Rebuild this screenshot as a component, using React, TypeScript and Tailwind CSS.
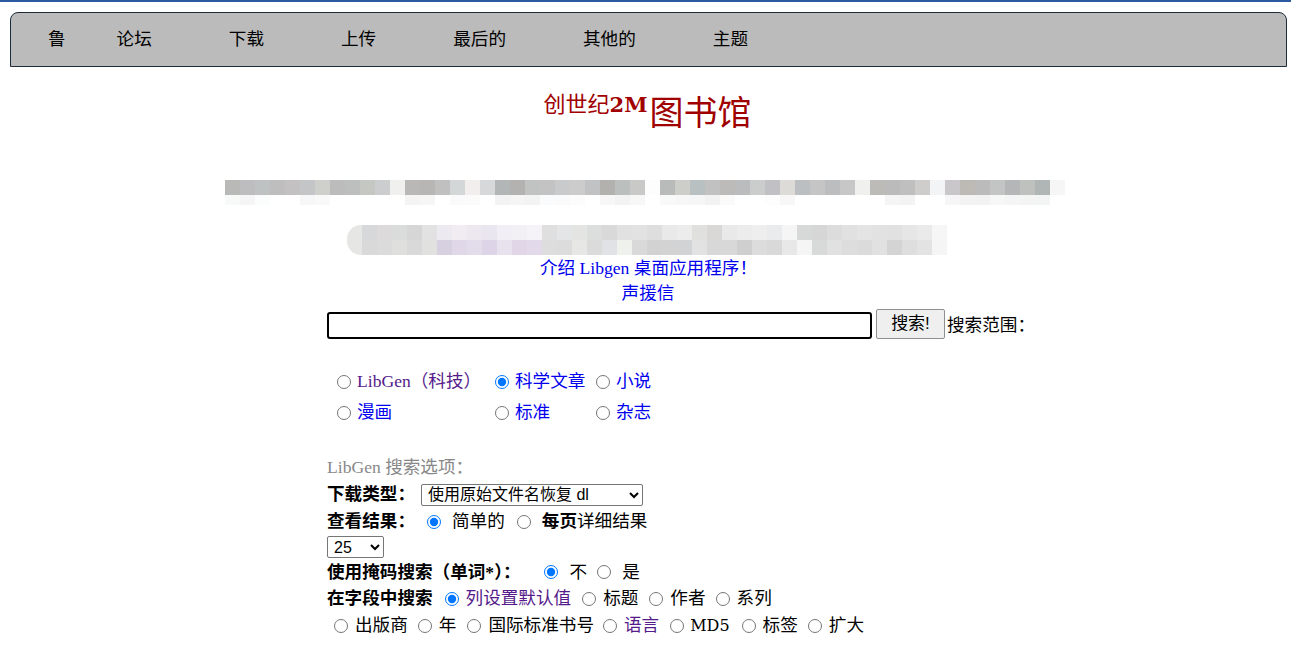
import React from "react";

const serif = "font-['Liberation_Serif','Noto_Sans_CJK_SC',serif]";
const sans = "font-['Liberation_Sans','Noto_Sans_CJK_SC',sans-serif]";

const navItems = ["鲁", "论坛", "下载", "上传", "最后的", "其他的", "主题"];

// pixelated (blurred) strips, one class per block
const topA = [
  "bg-[#b9b9b7]", "bg-[#bdbcbe]", "bg-[#bfc2c2]", "bg-[#bdbebd]", "bg-[#c3c1c1]", "bg-[#c4c5c6]", "bg-[#cfcfcc]", "bg-[#bdbcbc]",
  "bg-[#bdbebe]", "bg-[#c5c7c3]", "bg-[#cbcdcf]", "bg-[#f0f0ee]", "bg-[#b9b8b7]", "bg-[#b7b6b4]", "bg-[#c0c0c1]", "bg-[#d4d7d8]",
  "bg-[#f3eeee]", "bg-[#d6d8d9]", "bg-[#b3b6b6]", "bg-[#b3b2b0]", "bg-[#c1c3c3]", "bg-[#c3c3c3]", "bg-[#c8cacb]", "bg-[#cdcccc]",
  "bg-[#c1c2c3]", "bg-[#b3b1ae]", "bg-[#bbbfbe]", "bg-[#c9c9c8]", "bg-[#fdfdfe]", "bg-[#b9baba]", "bg-[#cdceca]", "bg-[#b9c0c1]",
  "bg-[#c1c1c1]", "bg-[#bdbbb9]", "bg-[#bbbcbe]", "bg-[#cbcdcc]", "bg-[#c0c0c5]", "bg-[#dcdbd8]", "bg-[#bcbfc2]", "bg-[#c5c5c5]",
  "bg-[#bbbdbf]", "bg-[#c7c7c7]", "bg-[#f0f0ee]", "bg-[#bcbbb8]", "bg-[#bbbbbb]", "bg-[#bfbfc0]", "bg-[#cfcdcb]", "bg-[#f3f4f6]",
  "bg-[#c9c7ca]", "bg-[#bdbab6]", "bg-[#bbbbbb]", "bg-[#c3c5c4]", "bg-[#b4b6b8]", "bg-[#bfc1be]", "bg-[#b0b6b6]", "bg-[#f6f6f6]",
];
const topB = [
  "bg-[#f8f9f9]", "bg-[#f5f5f5]", "bg-[#fbfcfc]", "bg-[#ffffff]", "bg-[#ffffff]", "bg-[#f7f7f7]", "bg-[#f9f9f9]", "bg-[#ffffff]",
  "bg-[#ffffff]", "bg-[#ffffff]", "bg-[#ffffff]", "bg-[#ffffff]", "bg-[#f4f4f4]", "bg-[#f6f6f6]", "bg-[#ffffff]", "bg-[#fafafa]",
  "bg-[#fbfbfb]", "bg-[#ffffff]", "bg-[#f3f3f3]", "bg-[#f5f5f5]", "bg-[#f3f3f3]", "bg-[#fafbfc]", "bg-[#fafafa]", "bg-[#fcfcfc]",
  "bg-[#ffffff]", "bg-[#f7f7f7]", "bg-[#f3f3f3]", "bg-[#f7f7f7]", "bg-[#ffffff]", "bg-[#f9f9f9]", "bg-[#f7f7f7]", "bg-[#f5f6f5]",
  "bg-[#f2f2f2]", "bg-[#fafafa]", "bg-[#ffffff]", "bg-[#ffffff]", "bg-[#fdfdfd]", "bg-[#f7f7f7]", "bg-[#ffffff]", "bg-[#ffffff]",
  "bg-[#ffffff]", "bg-[#ffffff]", "bg-[#ffffff]", "bg-[#ffffff]", "bg-[#f5f5f5]", "bg-[#f3f3f3]", "bg-[#ffffff]", "bg-[#ffffff]",
  "bg-[#f6f6f6]", "bg-[#f3f3f3]", "bg-[#f2f2f2]", "bg-[#f7f7f7]", "bg-[#f5f5f5]", "bg-[#f4f4f4]", "bg-[#f3f4f4]", "bg-[#ffffff]",
];
const midA = [
  "bg-[#e6e6e4]", "bg-[#d7d8d9]", "bg-[#dcdadb]", "bg-[#d9dcdb]", "bg-[#d6d6d6]", "bg-[#e2e2e2]", "bg-[#ede9f0]", "bg-[#f0ecf2]",
  "bg-[#ede8f0]", "bg-[#e9e6f0]", "bg-[#f1eff5]", "bg-[#f2eff5]", "bg-[#f5f3f7]", "bg-[#e0dfdf]", "bg-[#e4e5e6]", "bg-[#e4e4e3]",
  "bg-[#dcdddd]", "bg-[#d9d9d9]", "bg-[#e2e1e2]", "bg-[#e3e2e2]", "bg-[#dedede]", "bg-[#e9e9e9]", "bg-[#ececec]", "bg-[#e0e0df]",
  "bg-[#d9d8d6]", "bg-[#e9e9ea]", "bg-[#ececed]", "bg-[#eeeeee]", "bg-[#eaebed]", "bg-[#f5f5f5]", "bg-[#d7d8d8]", "bg-[#d6d6d6]",
  "bg-[#dcdcdc]", "bg-[#e1e1e1]", "bg-[#e4e4e4]", "bg-[#e2e2e2]", "bg-[#e1e1e1]", "bg-[#e6e6e6]", "bg-[#eaeaea]", "bg-[#f6f6f6]",
];
const midB = [
  "bg-[#e6e6e4]", "bg-[#d9d9da]", "bg-[#dbdbdb]", "bg-[#dfe0dd]", "bg-[#d8d9d8]", "bg-[#e1e1e0]", "bg-[#d6d0e0]", "bg-[#e0d8e8]",
  "bg-[#e3ddeb]", "bg-[#ddd4e7]", "bg-[#e8e2ef]", "bg-[#e0d6e8]", "bg-[#e2d9ea]", "bg-[#dedddd]", "bg-[#dcdcdd]", "bg-[#e7e7e6]",
  "bg-[#dcdbdb]", "bg-[#e1e2e5]", "bg-[#eff1ec]", "bg-[#d9d9d9]", "bg-[#d2d2d3]", "bg-[#d3d3d3]", "bg-[#d2d3d4]", "bg-[#e2e2e2]",
  "bg-[#d8d8d8]", "bg-[#d9d8d8]", "bg-[#cfcfcf]", "bg-[#dcdcdc]", "bg-[#d9d9d9]", "bg-[#e8e8e8]", "bg-[#f5f5f5]", "bg-[#d8d9d9]",
  "bg-[#e1e1e1]", "bg-[#dddddd]", "bg-[#dbdbdb]", "bg-[#e1e1e1]", "bg-[#d4d4d5]", "bg-[#dedede]", "bg-[#e3e3e3]", "bg-[#f5f5f5]",
];

function Strip({ cells, h }: { cells: string[]; h: string }) {
  return (
    <div className="flex">
      {cells.map((c, i) => (
        <div key={i} className={`w-[15px] ${h} ${c}`} />
      ))}
    </div>
  );
}

function Radio({ checked = false, name }: { checked?: boolean; name: string }) {
  return (
    <input
      type="radio"
      name={name}
      defaultChecked={checked}
      className="m-0 w-[14px] h-[14px] shrink-0"
    />
  );
}

function Opt({
  name,
  checked,
  children,
  color = "text-black",
}: {
  name: string;
  checked?: boolean;
  children: React.ReactNode;
  color?: string;
}) {
  return (
    <label className={`flex items-center gap-[6px] ${color}`}>
      <Radio name={name} checked={checked} />
      <span>{children}</span>
    </label>
  );
}

export default function App() {
  return (
    <div className={`min-h-screen bg-white border-t-2 border-[#2c5aa0] text-black ${serif} text-[17.6px]`}>
      {/* top menu */}
      <div className="mt-[10px] ml-[10px] mr-[4px] h-[55px] bg-[#bbbbbb] border border-[#1c2c3a] rounded-t-[8px] flex items-center pl-[37px] gap-[77px]">
        {navItems.map((t, i) => (
          <span key={t} className={`${sans} text-[17.6px] text-black ${i === 1 ? "-ml-[26px]" : ""}`}>
            {t}
          </span>
        ))}
      </div>

      {/* title */}
      <div className="flex justify-center items-start mt-[25px] h-[44px] text-[#a00000] pl-[4px]">
        <span className="text-[22px] leading-none -mt-[1px] font-['Noto_Sans_CJK_SC',serif]">
          创世纪<b className="font-['DejaVu_Serif',serif] font-bold text-[21px]">2M</b>
        </span>
        <span className="text-[34px] leading-none mt-[2px] ml-[2px] font-['Noto_Sans_CJK_SC',serif]">图书馆</span>
      </div>

      {/* blurred banner */}
      <div className="mt-[44px] ml-[225px]">
        <Strip cells={topA} h="h-[15px]" />
        <Strip cells={topB} h="h-[10px]" />
      </div>
      <div className="mt-[20px] ml-[347px] rounded-l-[14px] overflow-hidden w-fit">
        <Strip cells={midA} h="h-[15px]" />
        <Strip cells={midB} h="h-[15px]" />
      </div>

      {/* links */}
      <div className="flex flex-col items-center leading-[25px] mt-[1px]">
        <a className="text-[#0000ee] ml-[6px]">介绍 Libgen 桌面应用程序！</a>
        <a className="text-[#0000ee] ml-[5px]">声援信</a>
      </div>

      {/* search */}
      <div className="pl-[327px]">
        <div className="flex items-center mt-[3px] h-[30px]">
          <input
            type="text"
            className="w-[545px] h-[27px] border-2 border-black rounded-[3px] bg-white outline-none mt-[2px]"
          />
          <button className={`ml-[4px] w-[69px] h-[30px] bg-[#efefef] border border-[#8f8f8f] rounded-[2px] ${sans} text-[17px]`}>
            搜索!
          </button>
          <span className="ml-[2px] font-['Noto_Sans_CJK_SC',sans-serif] text-[17.6px]">搜索范围：</span>
        </div>

        <div className="mt-[31px] ml-[10px] grid grid-cols-[158px_101px_auto] gap-y-[8px] leading-[23px]">
          <Opt name="r" color="text-[#551a8b]">LibGen（科技）</Opt>
          <Opt name="r" checked color="text-[#0000ee]">科学文章</Opt>
          <Opt name="r" color="text-[#0000ee]">小说</Opt>
          <Opt name="r" color="text-[#0000ee]">漫画</Opt>
          <Opt name="r" color="text-[#0000ee]">标准</Opt>
          <Opt name="r" color="text-[#0000ee]">杂志</Opt>
        </div>

        {/* options */}
        <div className="mt-[30px] flex flex-col">
          <div className="h-[27px] flex items-center text-[#888888]">LibGen 搜索选项：</div>
          <div className="h-[27px] flex items-center">
            <b className="font-bold">下载类型：</b>
            <select className={`ml-[6px] w-[222px] h-[22px] border border-[#767676] rounded-[2px] ${sans} text-[16px] leading-[18px] px-[2px]`}>
              <option>使用原始文件名恢复 dl</option>
            </select>
          </div>
          <div className="h-[27px] flex items-center">
            <b className="font-bold mr-[12px]">查看结果：</b>
            <Radio name="v" checked />
            <span className={`${sans} ml-[11px] mr-[12px]`}>简单的</span>
            <Radio name="v" />
            <span className={`${sans} ml-[11px]`}>
              <b className="font-bold">每页</b>详细结果
            </span>
          </div>
          <div className="h-[24px] flex items-center">
            <select className={`w-[57px] h-[22px] border border-[#767676] rounded-[2px] ${sans} text-[16px] leading-[18px] px-[2px]`}>
              <option>25</option>
            </select>
          </div>
          <div className="h-[26px] flex items-center">
            <b className="font-bold mr-[23px]">使用掩码搜索（单词*）：</b>
            <Radio name="m" checked />
            <span className="ml-[12px] mr-[10px]">不</span>
            <Radio name="m" />
            <span className="ml-[11px]">是</span>
          </div>
          <div className="h-[27px] flex items-center gap-[7px]">
            <b className="font-bold mr-[5px]">在字段中搜索</b>
            <Radio name="f" checked />
            <span className="text-[#551a8b] mr-[4px]">列设置默认值</span>
            <Radio name="f" />
            <span className="mr-[4px]">标题</span>
            <Radio name="f" />
            <span className="mr-[3px]">作者</span>
            <Radio name="f" />
            <span>系列</span>
          </div>
          <div className="h-[27px] flex items-center gap-[7px] pl-[7px]">
            <Radio name="f" />
            <span className="mr-[3px]">出版商</span>
            <Radio name="f" />
            <span className="mr-[4px]">年</span>
            <Radio name="f" />
            <span className="mr-[2px]">国际标准书号</span>
            <Radio name="f" />
            <span className="text-[#551a8b] mr-[4px]">语言</span>
            <Radio name="f" />
            <span className="font-['DejaVu_Serif',serif] text-[16px] -ml-[1px] mr-[5px]">MD5</span>
            <Radio name="f" />
            <span className="mr-[3px]">标签</span>
            <Radio name="f" />
            <span>扩大</span>
          </div>
        </div>
      </div>
    </div>
  );
}
